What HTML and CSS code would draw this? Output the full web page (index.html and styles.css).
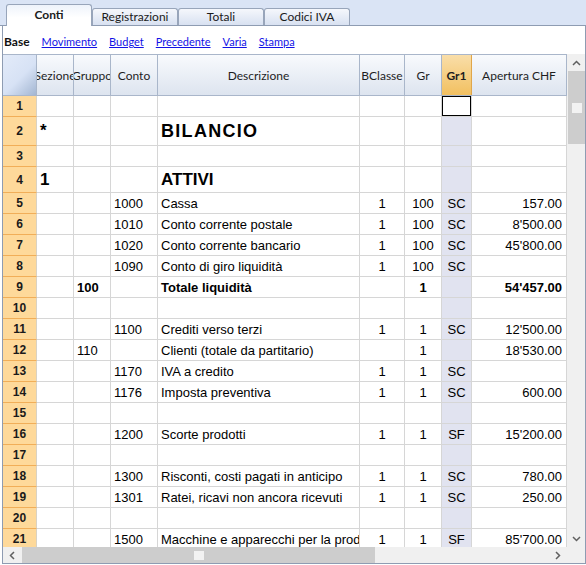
FILE: index.html
```html
<!DOCTYPE html>
<html>
<head>
    <meta charset="utf-8">
    <link rel="stylesheet" href="styles.css">
</head>
<body>
    <div class="tabs">
        <div class="tab tab-active">Conti</div>
        <div class="tab">Registrazioni</div>
        <div class="tab">Totali</div>
        <div class="tab">Codici IVA</div>
    </div>

    <div class="panel">
        <div class="views">
            <span class="view-current">Base</span>
            <a href="#">Movimento</a>
            <a href="#">Budget</a>
            <a href="#">Precedente</a>
            <a href="#">Varia</a>
            <a href="#">Stampa</a>
        </div>

        <div class="viewport">
            <div class="table">
                <div class="row row-head">
                    <div class="corner"></div>
                    <div class="hcell"><span>Sezione</span></div>
                    <div class="hcell"><span>Gruppo</span></div>
                    <div class="hcell">Conto</div>
                    <div class="hcell">Descrizione</div>
                    <div class="hcell">BClasse</div>
                    <div class="hcell">Gr</div>
                    <div class="hcell hcell-active">Gr1</div>
                    <div class="hcell">Apertura CHF</div>
                </div>

                <div class="row">
                    <div class="num">1</div><div class="cell"></div><div class="cell"></div><div class="cell"></div><div class="cell"></div>
                    <div class="cell center"></div><div class="cell center"></div><div class="cell center gr1 selected"></div><div class="cell right"></div>
                </div>
                <div class="row row-tall">
                    <div class="num">2</div><div class="cell big">*</div><div class="cell"></div><div class="cell"></div><div class="cell big title">BILANCIO</div>
                    <div class="cell center"></div><div class="cell center"></div><div class="cell center gr1"></div><div class="cell right"></div>
                </div>
                <div class="row">
                    <div class="num">3</div><div class="cell"></div><div class="cell"></div><div class="cell"></div><div class="cell"></div>
                    <div class="cell center"></div><div class="cell center"></div><div class="cell center gr1"></div><div class="cell right"></div>
                </div>
                <div class="row row-mid">
                    <div class="num">4</div><div class="cell big">1</div><div class="cell"></div><div class="cell"></div><div class="cell big">ATTIVI</div>
                    <div class="cell center"></div><div class="cell center"></div><div class="cell center gr1"></div><div class="cell right"></div>
                </div>
                <div class="row">
                    <div class="num">5</div><div class="cell"></div><div class="cell"></div><div class="cell">1000</div><div class="cell">Cassa</div>
                    <div class="cell center">1</div><div class="cell center">100</div><div class="cell center gr1">SC</div><div class="cell right">157.00</div>
                </div>
                <div class="row">
                    <div class="num">6</div><div class="cell"></div><div class="cell"></div><div class="cell">1010</div><div class="cell">Conto corrente postale</div>
                    <div class="cell center">1</div><div class="cell center">100</div><div class="cell center gr1">SC</div><div class="cell right">8'500.00</div>
                </div>
                <div class="row">
                    <div class="num">7</div><div class="cell"></div><div class="cell"></div><div class="cell">1020</div><div class="cell">Conto corrente bancario</div>
                    <div class="cell center">1</div><div class="cell center">100</div><div class="cell center gr1">SC</div><div class="cell right">45'800.00</div>
                </div>
                <div class="row">
                    <div class="num">8</div><div class="cell"></div><div class="cell"></div><div class="cell">1090</div><div class="cell">Conto di giro liquidità</div>
                    <div class="cell center">1</div><div class="cell center">100</div><div class="cell center gr1">SC</div><div class="cell right"></div>
                </div>
                <div class="row">
                    <div class="num">9</div><div class="cell"></div><div class="cell bold">100</div><div class="cell"></div><div class="cell bold">Totale liquidità</div>
                    <div class="cell center"></div><div class="cell center bold">1</div><div class="cell center gr1"></div><div class="cell right bold">54'457.00</div>
                </div>
                <div class="row">
                    <div class="num">10</div><div class="cell"></div><div class="cell"></div><div class="cell"></div><div class="cell"></div>
                    <div class="cell center"></div><div class="cell center"></div><div class="cell center gr1"></div><div class="cell right"></div>
                </div>
                <div class="row">
                    <div class="num">11</div><div class="cell"></div><div class="cell"></div><div class="cell">1100</div><div class="cell">Crediti verso terzi</div>
                    <div class="cell center">1</div><div class="cell center">1</div><div class="cell center gr1">SC</div><div class="cell right">12'500.00</div>
                </div>
                <div class="row">
                    <div class="num">12</div><div class="cell"></div><div class="cell">110</div><div class="cell"></div><div class="cell">Clienti (totale da partitario)</div>
                    <div class="cell center"></div><div class="cell center">1</div><div class="cell center gr1"></div><div class="cell right">18'530.00</div>
                </div>
                <div class="row">
                    <div class="num">13</div><div class="cell"></div><div class="cell"></div><div class="cell">1170</div><div class="cell">IVA a credito</div>
                    <div class="cell center">1</div><div class="cell center">1</div><div class="cell center gr1">SC</div><div class="cell right"></div>
                </div>
                <div class="row">
                    <div class="num">14</div><div class="cell"></div><div class="cell"></div><div class="cell">1176</div><div class="cell">Imposta preventiva</div>
                    <div class="cell center">1</div><div class="cell center">1</div><div class="cell center gr1">SC</div><div class="cell right">600.00</div>
                </div>
                <div class="row">
                    <div class="num">15</div><div class="cell"></div><div class="cell"></div><div class="cell"></div><div class="cell"></div>
                    <div class="cell center"></div><div class="cell center"></div><div class="cell center gr1"></div><div class="cell right"></div>
                </div>
                <div class="row">
                    <div class="num">16</div><div class="cell"></div><div class="cell"></div><div class="cell">1200</div><div class="cell">Scorte prodotti</div>
                    <div class="cell center">1</div><div class="cell center">1</div><div class="cell center gr1">SF</div><div class="cell right">15'200.00</div>
                </div>
                <div class="row">
                    <div class="num">17</div><div class="cell"></div><div class="cell"></div><div class="cell"></div><div class="cell"></div>
                    <div class="cell center"></div><div class="cell center"></div><div class="cell center gr1"></div><div class="cell right"></div>
                </div>
                <div class="row">
                    <div class="num">18</div><div class="cell"></div><div class="cell"></div><div class="cell">1300</div><div class="cell">Risconti, costi pagati in anticipo</div>
                    <div class="cell center">1</div><div class="cell center">1</div><div class="cell center gr1">SC</div><div class="cell right">780.00</div>
                </div>
                <div class="row">
                    <div class="num">19</div><div class="cell"></div><div class="cell"></div><div class="cell">1301</div><div class="cell">Ratei, ricavi non ancora ricevuti</div>
                    <div class="cell center">1</div><div class="cell center">1</div><div class="cell center gr1">SC</div><div class="cell right">250.00</div>
                </div>
                <div class="row">
                    <div class="num">20</div><div class="cell"></div><div class="cell"></div><div class="cell"></div><div class="cell"></div>
                    <div class="cell center"></div><div class="cell center"></div><div class="cell center gr1"></div><div class="cell right"></div>
                </div>
                <div class="row">
                    <div class="num">21</div><div class="cell"></div><div class="cell"></div><div class="cell">1500</div><div class="cell">Macchine e apparecchi per la produzione</div>
                    <div class="cell center">1</div><div class="cell center">1</div><div class="cell center gr1">SF</div><div class="cell right">85'700.00</div>
                </div>
                <div class="row">
                    <div class="num">22</div><div class="cell"></div><div class="cell"></div><div class="cell"></div><div class="cell"></div>
                    <div class="cell center"></div><div class="cell center"></div><div class="cell center gr1"></div><div class="cell right"></div>
                </div>
            </div>

            <div class="vscroll">
                <div class="arrow">
                    <svg width="9" height="6" viewBox="0 0 9 6"><path d="M1 5 L4.5 1.5 L8 5" fill="none" stroke="#606060" stroke-width="1.5"/></svg>
                </div>
                <div class="vthumb"><span class="grip"></span></div>
                <div class="track"></div>
                <div class="arrow">
                    <svg width="9" height="6" viewBox="0 0 9 6"><path d="M1 1 L4.5 4.5 L8 1" fill="none" stroke="#606060" stroke-width="1.5"/></svg>
                </div>
            </div>
        </div>

        <div class="hscroll">
            <div class="arrow">
                <svg width="6" height="9" viewBox="0 0 6 9"><path d="M5 1 L1.5 4.5 L5 8" fill="none" stroke="#606060" stroke-width="1.5"/></svg>
            </div>
            <div class="hthumb"><span class="grip"></span></div>
            <div class="track"></div>
            <div class="arrow">
                <svg width="6" height="9" viewBox="0 0 6 9"><path d="M1 1 L4.5 4.5 L1 8" fill="none" stroke="#606060" stroke-width="1.5"/></svg>
            </div>
            <div class="scroll-corner"></div>
        </div>
    </div>
</body>
</html>
```

FILE: styles.css
```css
body {
    margin: 0;
    width: 586px;
    height: 565px;
    overflow: hidden;
    background: white;
    font-family: 'Liberation Sans', Arial, sans-serif;
    color: #000;
}

/* schede in alto */
.tabs {
    display: flex;
    align-items: flex-end;
    height: 25px;
    padding-left: 6px;
    background: #dae4f5;
    border-bottom: 1px solid #8e9cb2;
}

.tab {
    box-sizing: border-box;
    width: 86px;
    height: 17px;
    border: 1px solid #98a5ba;
    border-bottom: none;
    border-radius: 3px 3px 0 0;
    background: linear-gradient(#f5f7fc, #d8e1f1);
    font-family: Lato, sans-serif;
    font-size: 12px;
    line-height: 15px;
    color: #1b1b1b;
    text-align: center;
}

.tab-active {
    height: 22px;
    margin-bottom: -1px;
    background: linear-gradient(#eef3fb, white 60%);
    font-weight: bold;
    line-height: 20px;
}

.panel {
    box-sizing: border-box;
    width: 584px;
    height: 538px;
    margin-left: 2px;
    border: 1px solid #8e9cb2;
    border-top: none;
}

.views {
    box-sizing: border-box;
    display: flex;
    align-items: center;
    gap: 12px;
    height: 28px;
    padding: 3px 0 0 1px;
    font-family: Lato, sans-serif;
    font-size: 11px;
}

.views a {
    color: #1212e6;
}

.view-current {
    font-size: 12px;
    font-weight: bold;
    color: #111;
}

/* griglia */
.viewport {
    display: flex;
    height: 493px;
}

.table {
    width: 564px;
    overflow: hidden;
}

.row {
    display: grid;
    grid-template-columns: 34px 37px 37px 47px 202px 45px 37px 30px 95px;
    height: 21px;
}

.row-tall {
    height: 29px;
}

.row-mid {
    height: 26px;
}

.row-head {
    box-sizing: border-box;
    height: 42px;
    border-top: 1px solid #a9b6ca;
    border-bottom: 1px solid #a9b6ca;
}

.corner {
    border-right: 1px solid #a9b6ca;
    background: linear-gradient(135deg, #e3ebf9 0%, #d7e2f5 55%, #a3b6d2 100%);
}

.hcell {
    display: flex;
    align-items: center;
    justify-content: center;
    overflow: hidden;
    white-space: nowrap;
    border-right: 1px solid #a9b6ca;
    background: linear-gradient(#f8fafd, #dde4ef);
    font-family: Lato, sans-serif;
    font-size: 12px;
    color: #1e1e1e;
}

.hcell span {
    flex-shrink: 0;
}

.hcell-active {
    background: linear-gradient(#f9dea9, #f2c060);
    border-right-color: #e0a64a;
    font-weight: bold;
}

.num {
    box-sizing: border-box;
    display: flex;
    align-items: center;
    justify-content: center;
    background: #fed99a;
    border-bottom: 1px solid #f1ae58;
    border-right: 1px solid #d9d2c4;
    font-size: 12px;
    font-weight: bold;
    color: #1a1a1a;
}

.cell {
    box-sizing: border-box;
    display: flex;
    align-items: center;
    padding: 0 3px;
    overflow: hidden;
    white-space: nowrap;
    border-right: 1px solid #d6d6d6;
    border-bottom: 1px solid #d6d6d6;
    font-size: 13px;
}

.center {
    justify-content: center;
}

.right {
    justify-content: flex-end;
    padding-right: 4px;
}

.bold {
    font-weight: bold;
}

.big {
    font-size: 17px;
    font-weight: bold;
}

.title {
    font-size: 18px;
    letter-spacing: 1.3px;
}

.gr1 {
    background: #e1e3f0;
}

.gr1.selected {
    background: white;
    box-shadow: inset 0 0 0 1px #000;
}

/* barre di scorrimento */
.vscroll {
    display: flex;
    flex-direction: column;
    width: 18px;
    background: #f0f0f0;
}

.arrow {
    display: flex;
    align-items: center;
    justify-content: center;
    flex: 0 0 17px;
}

.track {
    flex: 1;
}

.vthumb {
    display: flex;
    align-items: center;
    justify-content: center;
    height: 73px;
    margin-left: 1px;
    background: #cdcdcd;
}

.hscroll {
    display: flex;
    height: 16px;
    background: #f0f0f0;
}

.hscroll .arrow {
    flex-basis: 18px;
}

.hthumb {
    display: flex;
    align-items: center;
    justify-content: center;
    width: 353px;
    margin-left: 1px;
    background: #cdcdcd;
}

.grip {
    width: 10px;
    height: 10px;
    background: #f2f2f2;
}

.hthumb .grip {
    height: 9px;
}

.scroll-corner {
    width: 18px;
    background: #f0f0f0;
}
```
